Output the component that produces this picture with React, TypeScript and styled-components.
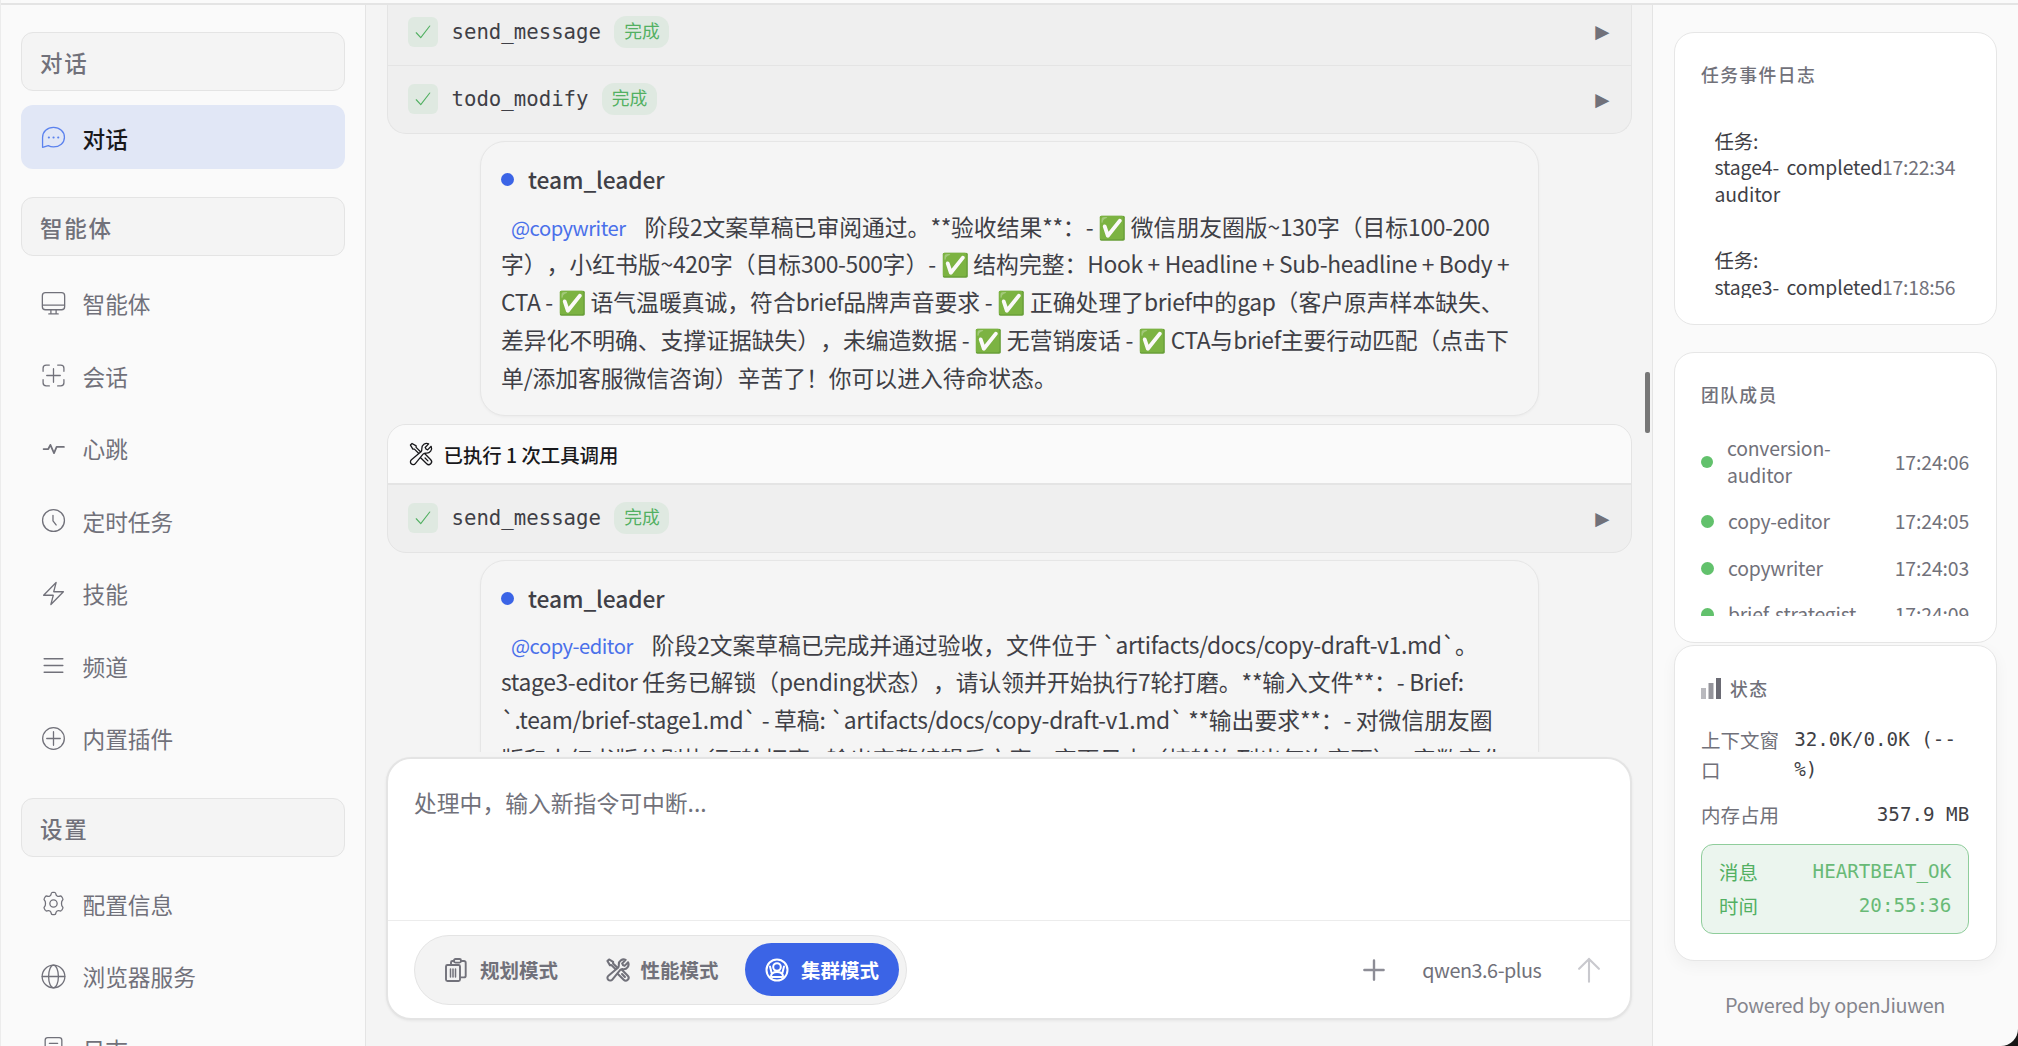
import React from "react";
import styled, { createGlobalStyle, css } from "styled-components";

const sans = `"Noto Sans CJK SC", "Noto Sans", sans-serif`;
const mono = `"DejaVu Sans Mono", "Noto Sans CJK SC", monospace`;

const c = {
  line: "#e4e4e4",
  panel: "#fafafa",
  canvas: "#f4f4f4",
  text: "#3f3f46",
  muted: "#71717a",
  strong: "#18181b",
  accent: "#3b64e6",
  green: "#52b062",
};

const Global = createGlobalStyle`
  * { box-sizing: border-box; }
  html, body { margin: 0; background: #161616; overflow: hidden; }
  body { font-family: ${sans}; color: ${c.text}; text-spacing-trim: space-all; }
`;

const Window = styled.div`
  display: flex;
  flex-direction: column;
  height: 1046px;
  width: 2018px;
  overflow: hidden;
  background: ${c.panel};
  border-left: 1px solid #ececec;
  border-bottom-right-radius: 17px;
`;
const TopBar = styled.header`
  flex: none;
  height: 5px;
  border-bottom: 2px solid ${c.line};
`;
const Columns = styled.div`
  flex: 1;
  min-height: 0;
  display: grid;
  grid-template-columns: 365px 1287px 1fr;
`;

/* Sidebar */
const Sidebar = styled.nav`
  overflow: hidden;
  padding: 26.5px 20px 0;
  border-right: 1px solid ${c.line};
`;
const Group = styled.section`
  display: flex;
  flex-direction: column;
  gap: 8px;
  margin-bottom: 28px;
`;
const GroupLabel = styled.div`
  flex: none;
  height: 59px;
  margin-bottom: 6px;
  padding: 1px 18px 0;
  display: flex;
  align-items: center;
  border: 1px solid ${c.line};
  border-radius: 12px;
  background: ${c.canvas};
  color: ${c.muted};
  font-size: 22.5px;
  letter-spacing: 1.7px;
  font-weight: 500;
`;
const NavItem = styled.a<{ $active?: boolean }>`
  flex: none;
  height: 64.5px;
  padding: 0 19.5px;
  display: flex;
  align-items: center;
  gap: 17px;
  border-radius: 12px;
  color: ${(p) => (p.$active ? c.strong : c.muted)};
  background: ${(p) => (p.$active ? "#e1e7f6" : "transparent")};
  font-size: 22.7px;
  font-weight: ${(p) => (p.$active ? 500 : 400)};
  svg {
    color: ${(p) => (p.$active ? "#5b82ee" : c.muted)};
    margin-top: 2px;
  }
  span {
    padding-top: 3px;
  }
`;

/* Chat */
const Chat = styled.main`
  min-height: 0;
  display: flex;
  flex-direction: column;
  background: ${c.canvas};
  border-right: 1px solid ${c.line};
`;
const Stream = styled.div`
  flex: none;
  position: relative;
  height: 747px;
  padding: 0 20.5px;
  overflow: hidden;
`;
const Thumb = styled.div`
  position: absolute;
  right: 2px;
  top: 367px;
  width: 5px;
  height: 61px;
  border-radius: 2px;
  background: #777;
`;
const ToolCard = styled.div<{ $cut?: boolean }>`
  border: 1.5px solid ${c.line};
  border-top-width: ${(p) => (p.$cut ? 0 : "1.5px")};
  border-radius: ${(p) => (p.$cut ? "0 0 19px 19px" : "19px")};
  background: #efefef;
  overflow: hidden;
`;
const ToolHead = styled.div`
  height: 60px;
  padding: 0 20px;
  display: flex;
  align-items: center;
  gap: 10px;
  background: ${c.panel};
  border-bottom: 2px solid ${c.line};
  color: ${c.strong};
  font-size: 19.4px;
  font-weight: 500;
`;
const ToolRow = styled.div<{ $h: number; $lift: number }>`
  height: ${(p) => p.$h}px;
  padding: 0 21px ${(p) => p.$lift}px 20px;
  display: flex;
  align-items: center;
  & + & {
    border-top: 1px solid ${c.line};
  }
`;
const CheckBox = styled.span`
  width: 30px;
  height: 30px;
  display: grid;
  place-items: center;
  border-radius: 6px;
  background: #dfe9e1;
  color: ${c.green};
`;
const ToolName = styled.span`
  margin: 0 13.5px 0 14px;
  padding-top: 1px;
  font: 20.7px/1.4 ${mono};
`;
const Badge = styled.span`
  height: 32px;
  width: 55px;
  display: grid;
  justify-content: center;
  border-radius: 12px;
  background: #dfe9e1;
  color: ${c.green};
  font-size: 17.8px;
  line-height: 29px;
`;
const Caret = styled.span`
  margin-left: auto;
  padding-top: 1px;
  font: 18.5px/1 "DejaVu Sans", sans-serif;
  color: ${c.muted};
`;
const Bubble = styled.article<{ $h: number }>`
  width: 1059px;
  height: ${(p) => p.$h}px;
  margin: 7.5px auto 8px;
  padding: 20px 20.5px;
  border: 1.5px solid #e6e6e6;
  border-radius: 25px;
  background: #f5f5f5;
  box-shadow: 0 1px 3px rgba(0, 0, 0, 0.04);
`;
const Author = styled.div`
  display: flex;
  align-items: center;
  gap: 14px;
  height: 34px;
  font-size: 22.8px;
  font-weight: 500;
  letter-spacing: -0.1px;
`;
const Dot = styled.i<{ $color: string; $size: number }>`
  flex: 0 0 auto;
  width: ${(p) => p.$size}px;
  height: ${(p) => p.$size}px;
  border-radius: 50%;
  background: ${(p) => p.$color};
`;
const Body = styled.div<{ $top: number }>`
  margin-top: ${(p) => p.$top}px;
  font-size: 22.8px;
`;
const Line = styled.div<{ $h?: number }>`
  height: ${(p) => p.$h ?? 38.2}px;
  line-height: 38.2px;
  white-space: nowrap;
`;
const Latin = styled.span`
  letter-spacing: -0.33px;
`;
const Mention = styled.span`
  margin: 0 19px 0 10px;
  font-size: 20.2px;
  letter-spacing: -0.5px;
  color: #4a70ea;
`;

/* Composer */
const Composer = styled.section`
  margin: 5px 20px 0;
  height: 263px;
  display: flex;
  flex-direction: column;
  border: 2px solid ${c.line};
  border-radius: 25px;
  background: #fff;
  box-shadow: 0 1px 3px rgba(0, 0, 0, 0.06);
`;
const Placeholder = styled.div`
  height: 162px;
  padding: 25px 26px;
  border-bottom: 1.5px solid #ececec;
  color: ${c.muted};
  font-size: 22.8px;
  line-height: 38px;
`;
const Actions = styled.div`
  flex: 1;
  padding: 0 26.6px 0 26px;
  display: flex;
  align-items: center;
`;
const Modes = styled.div`
  height: 70px;
  padding: 0 7px 0 9px;
  display: flex;
  align-items: center;
  border: 1.5px solid ${c.line};
  border-radius: 35px;
  background: #f3f3f3;
`;
const Mode = styled.button<{ $on?: boolean; $w: number; $gap: number }>`
  width: ${(p) => p.$w}px;
  height: 53px;
  padding: 0 0 0 20px;
  border: 0;
  border-radius: 27px;
  display: flex;
  align-items: center;
  gap: ${(p) => p.$gap}px;
  background: ${(p) => (p.$on ? c.accent : "transparent")};
  color: ${(p) => (p.$on ? "#fff" : c.muted)};
  font: 600 19.5px/1 ${sans};
  white-space: nowrap;
`;
const Model = styled.span`
  margin: 0 34px 0 37px;
  font-size: 19.8px;
  letter-spacing: -0.45px;
  color: ${c.muted};
`;
const Plus = styled.span`
  margin-left: auto;
  display: flex;
  color: #8d8d96;
`;
const Send = styled.span`
  display: flex;
  color: #c9c9ce;
`;

/* Right rail */
const Rail = styled.aside`
  padding: 26.5px 21.300px 0 20.5px;
  display: flex;
  flex-direction: column;
  overflow: hidden;
`;
const Card = styled.section<{ $h: number; $gap: number; $shadow?: boolean }>`
  flex: none;
  height: ${(p) => p.$h}px;
  margin-bottom: ${(p) => p.$gap}px;
  padding: 0 26.5px 26px;
  display: flex;
  flex-direction: column;
  border: 1.5px solid #e6e6e6;
  border-radius: 20px;
  background: #fff;
  ${(p) =>
    p.$shadow &&
    css`
      box-shadow: 0 5px 16px rgba(0, 0, 0, 0.045);
    `}
`;
const CardTitle = styled.h3<{ $top: number }>`
  flex: none;
  margin: ${(p) => p.$top}px 0 0;
  height: 32px;
  display: flex;
  align-items: center;
  gap: 9px;
  color: ${c.muted};
  font-size: 17.8px;
  font-weight: 500;
  letter-spacing: 1.4px;
`;
const Scroll = styled.div<{ $top: number }>`
  flex: 1;
  min-height: 0;
  margin-top: ${(p) => p.$top}px;
  overflow: hidden;
`;
const Event = styled.div`
  height: 119.4px;
  padding: 0 13.5px;
  display: grid;
  grid-template-columns: 72px 95.5px auto;
  justify-content: start;
  align-items: center;
  font-size: 19.4px;
  line-height: 26.4px;
  letter-spacing: -0.1px;
  white-space: nowrap;
  time {
    color: ${c.muted};
    letter-spacing: -0.25px;
  }
`;
const Member = styled.div<{ $h: number }>`
  height: ${(p) => p.$h}px;
  display: flex;
  align-items: center;
  gap: 14px;
  font-size: 19.4px;
  line-height: 26.6px;
  letter-spacing: -0.22px;
  color: ${c.muted};
  time {
    margin-left: auto;
    letter-spacing: -0.1px;
  }
`;
const Stat = styled.div<{ $top: number }>`
  margin-top: ${(p) => p.$top}px;
  display: flex;
  justify-content: space-between;
  font-size: 19.5px;
  line-height: 30.7px;
  white-space: nowrap;
  color: ${c.muted};
`;
const Value = styled.span<{ $w?: number }>`
  width: ${(p) => (p.$w ? `${p.$w}px` : "auto")};
  font-family: ${mono};
  font-size: 19.2px;
  color: ${c.text};
`;
const Beat = styled.div`
  margin-top: 13px;
  height: 90px;
  flex: none;
  padding: 0 17px;
  display: flex;
  flex-direction: column;
  justify-content: center;
  border: 1.5px solid #8fcd9b;
  border-radius: 12px;
  background: #ebf5ee;
  color: ${c.green};
  font-size: 19.4px;
  line-height: 33.3px;
`;
const BeatRow = styled.div`
  display: flex;
  justify-content: space-between;
`;
const BeatValue = styled.span`
  font-family: ${mono};
  font-size: 19.2px;
  opacity: 0.85;
`;
const Footer = styled.footer`
  text-align: center;
  font-size: 19.8px;
  letter-spacing: -0.32px;
  line-height: 30px;
  color: #85858d;
`;

const IconBase = styled.svg`
  flex: none;
`;
const Svg = ({ size = 24, sw = 1.3, children }: { size?: number; sw?: number; children: React.ReactNode }) => (
  <IconBase width={size} height={size} viewBox="0 0 24 24" fill="none" stroke="currentColor" strokeWidth={sw} strokeLinecap="round" strokeLinejoin="round">
    {children}
  </IconBase>
);

const icons = {
  chat: <><path d="M1.500 21.500V12C1.500 6.200 6 2.300 12 2.300S22.500 6.200 22.500 11.700 18 21 12 21c-1.800 0-3.500-.4-5-1.200L1.500 21.500Z" /><path d="M7.500 12h.1M12 12h.1M16.500 12h.1" strokeWidth="2" /></>,
  monitor: <><rect x="1.300" y="1.500" width="21.400" height="16.500" rx="3" /><path d="M1.500 13.500h21M9.500 18v3.700M14.500 18v3.700M7.500 22h9" /></>,
  session: <><path d="M2 8V5a3 3 0 0 1 3-3H8M16 2h3a3 3 0 0 1 3 3V8M22 16v3a3 3 0 0 1-3 3H16M8 22H5a3 3 0 0 1-3-3V16M12 5.500v13M5.500 12h13" /></>,
  pulse: <path strokeWidth="1.700" d="M2.500 12.500H7L9 8.500l3.500 8 2.500-6H22" />,
  clock: <><circle cx="12" cy="12" r="10.500" /><path d="M11.500 7v5.300l3 4" /></>,
  bolt: <path d="m2.500 13.700 12-12.200L12.200 10.300h9.300L9.500 22.500 11.800 13.700H2.500Z" />,
  bars: <path d="M3 5.500h18M3 12h18M3 18.500h18" />,
  plus: <><circle cx="12" cy="12" r="10.400" /><path d="M12 5.500v13M5.500 12h13" /></>,
  gear: <><path d="M9.600 3.200c.1-.9.600-1.900 1.500-1.900h1.800c.9 0 1.400 1 1.500 1.900.1.700.5 1.200 1.100 1.600.6.400 1.200.6 1.800.3.9-.4 2.100-.4 2.600.400l1 1.700c.5.800 0 1.600-.6 2.200-.5.500-.6 1.200-.6 2.600s.1 2.100.6 2.600c.6.600 1.100 1.400.6 2.200l-1 1.700c-.5.800-1.700.8-2.600.4-.6-.3-1.200-.1-1.800.3-.6.400-1 .9-1.100 1.600-.1.900-.6 1.900-1.500 1.900h-1.800c-.9 0-1.400-1-1.500-1.900-.1-.7-.5-1.200-1.100-1.600-.6-.4-1.200-.6-1.800-.3-.9.400-2.100.4-2.600-.4l-1-1.700c-.5-.8 0-1.600.6-2.200.5-.5.6-1.200.6-2.600s-.1-2.100-.6-2.600c-.6-.6-1.100-1.400-.6-2.200l1-1.700c.5-.8 1.700-.8 2.600-.4.6.3 1.200.1 1.800-.3.6-.4 1-.9 1.100-1.600Z" /><circle cx="12" cy="12" r="3.500" /></>,
  globe: <><circle cx="12" cy="12" r="10.900" /><ellipse cx="12" cy="12" rx="4.700" ry="10.900" /><path d="M1.200 12h21.600" /></>,
  log: <><rect x="4" y="1.500" width="16" height="21" rx="2.500" /><path d="M8 7h8M8 12h8" /></>,
};

const Tools = ({ sw }: { sw: number }) => (
  <Svg size={26} sw={sw}>
    <path d="M11.420 15.170 17.250 21A2.652 2.652 0 0 0 21 17.250l-5.877-5.877M11.420 15.170l2.496-3.030c.317-.384.740-.626 1.208-.766M11.420 15.170l-4.655 5.653a2.548 2.548 0 1 1-3.586-3.586l6.837-5.630m5.108-.233c.550-.164 1.163-.188 1.743-.140a4.500 4.500 0 0 0 4.486-6.336l-3.276 3.277a3.004 3.004 0 0 1-2.250-2.250l3.276-3.276a4.500 4.500 0 0 0-6.336 4.486c.091 1.076-.071 2.264-.904 2.950l-.102.085m-1.745 1.437L5.909 7.500H4.500L2.250 3.750l1.500-1.500L7.500 4.500v1.409l4.260 4.260m-1.745 1.437 1.745-1.437m6.615 8.206L15.750 15.750" />
  </Svg>
);

/* Latin runs inside Chinese copy are tracked slightly tighter. */
const Mixed = ({ children }: { children: string }) => (
  <>
    {children.split(/([\x20-\x7e]+)/).map((part, i) => (i % 2 ? <Latin key={i}>{part}</Latin> : part))}
  </>
);

const Tool = ({ name, h, lift = 0 }: { name: string; h: number; lift?: number }) => (
  <ToolRow $h={h} $lift={lift}>
    <CheckBox><Svg size={18} sw={1.5}><path d="m3 13 6 6.500L21 4" /></Svg></CheckBox>
    <ToolName>{name}</ToolName>
    <Badge>完成</Badge>
    <Caret>▶</Caret>
  </ToolRow>
);

type Key = keyof typeof icons;
const groups: { label: string; items: [Key, string, boolean?][] }[] = [
  { label: "对话", items: [["chat", "对话", true]] },
  {
    label: "智能体",
    items: [["monitor", "智能体"], ["session", "会话"], ["pulse", "心跳"], ["clock", "定时任务"], ["bolt", "技能"], ["bars", "频道"], ["plus", "内置插件"]],
  },
  { label: "设置", items: [["gear", "配置信息"], ["globe", "浏览器服务"], ["log", "日志"]] },
];

const messages = [
  {
    to: "@copywriter",
    top: 12,
    first: 36.5,
    lines: [
      "阶段2文案草稿已审阅通过。**验收结果**：- ✅ 微信朋友圈版~130字（目标100-200",
      "字），小红书版~420字（目标300-500字）- ✅ 结构完整：Hook + Headline + Sub-headline + Body +",
      "CTA - ✅ 语气温暖真诚，符合brief品牌声音要求 - ✅ 正确处理了brief中的gap（客户原声样本缺失、",
      "差异化不明确、支撑证据缺失），未编造数据 - ✅ 无营销废话 - ✅ CTA与brief主要行动匹配（点击下",
      "单/添加客服微信咨询）辛苦了！你可以进入待命状态。",
    ],
  },
  {
    to: "@copy-editor",
    top: 10.5,
    first: 37.8,
    lines: [
      "阶段2文案草稿已完成并通过验收，文件位于 `artifacts/docs/copy-draft-v1.md`。",
      "stage3-editor 任务已解锁（pending状态），请认领并开始执行7轮打磨。**输入文件**：- Brief:",
      "`.team/brief-stage1.md` - 草稿: `artifacts/docs/copy-draft-v1.md` **输出要求**：- 对微信朋友圈",
      "版和小红书版分别执行7轮打磨 - 输出完整编辑后文案 + 变更日志（按轮次列出每次变更） - 字数变化",
    ],
  },
];

const Message = ({ m }: { m: (typeof messages)[number] }) => (
  <Bubble $h={275}>
    <Author><Dot $color={c.accent} $size={13} />team_leader</Author>
    <Body $top={m.top}>
      {m.lines.map((line, i) => (
        <Line key={i} $h={i === 0 ? m.first : undefined}>
          {i === 0 && <Mention>{m.to}</Mention>}
          <Mixed>{line}</Mixed>
        </Line>
      ))}
    </Body>
  </Bubble>
);

export default function App() {
  return (
    <>
      <Global />
      <Window>
        <TopBar />
        <Columns>
          <Sidebar>
            {groups.map((g) => (
              <Group key={g.label}>
                <GroupLabel>{g.label}</GroupLabel>
                {g.items.map(([icon, label, active]) => (
                  <NavItem key={label} $active={active}>
                    <Svg size={25} sw={1.25}>{icons[icon]}</Svg>
                    <span>{label}</span>
                  </NavItem>
                ))}
              </Group>
            ))}
          </Sidebar>

          <Chat>
            <Stream>
              <ToolCard $cut>
                <Tool name="send_message" h={60} lift={7} />
                <Tool name="todo_modify" h={67.5} />
              </ToolCard>
              <Message m={messages[0]} />
              <ToolCard>
                <ToolHead><Tools sw={1.2} />已执行 1 次工具调用</ToolHead>
                <Tool name="send_message" h={66.5} />
              </ToolCard>
              <Message m={messages[1]} />
              <Thumb />
            </Stream>
            <Composer>
              <Placeholder>处理中，输入新指令可中断...</Placeholder>
              <Actions>
                <Modes>
                  <Mode $w={160.5} $gap={12}>
                    <Svg size={24} sw={1.9}>
                      <path d="M7 6V4.500A1.500 1.500 0 0 1 8.500 3H10M17 3h3a1.700 1.700 0 0 1 1.700 1.700v13A1.700 1.700 0 0 1 20 19.400h-3" />
                      <rect x="10" y="1" width="7" height="3.600" rx="1.500" />
                      <rect x="2" y="7" width="14" height="16" rx="1.500" />
                      <path d="M6.500 11v8M9 11v8M11.500 11v8" strokeWidth="1.500" />
                    </Svg>
                    规划模式
                  </Mode>
                  <Mode $w={160.5} $gap={10}><Tools sw={1.9} />性能模式</Mode>
                  <Mode $on $w={154} $gap={12}>
                    <Svg size={24} sw={2}>
                      <circle cx="12" cy="12" r="10.500" />
                      <circle cx="12" cy="9" r="3.800" />
                      <path d="M6 18.500c0-3 2.500-4.500 6-4.500s6 1.500 6 4.500M5 8.500l1.500 6M19 8.500l-1.500 6M7 19h10" />
                    </Svg>
                    集群模式
                  </Mode>
                </Modes>
                <Plus><Svg size={22} sw={2.6}><path d="M12 1.500v21M1.500 12h21" /></Svg></Plus>
                <Model>qwen3.6-plus</Model>
                <Send><Svg size={28} sw={1.8}><path d="M12 22V2.500M3.500 11 12 2.500 20.500 11" /></Svg></Send>
              </Actions>
            </Composer>
          </Chat>

          <Rail>
            <Card $h={293.5} $gap={27}>
              <CardTitle $top={25}>任务事件日志</CardTitle>
              <Scroll $top={18.5}>
                <Event><span>任务:<br />stage4-<br />auditor</span><span>completed</span><time>17:22:34</time></Event>
                <Event><span>任务:<br />stage3-<br />editor</span><span>completed</span><time>17:18:56</time></Event>
              </Scroll>
            </Card>
            <Card $h={291} $gap={2}>
              <CardTitle $top={25}>团队成员</CardTitle>
              <Scroll $top={15.5}>
                <Member $h={73}><Dot $color="#62c16c" $size={12} /><span>conversion-<br />auditor</span><time>17:24:06</time></Member>
                <Member $h={46.5}><Dot $color="#62c16c" $size={13} /><span>copy-editor</span><time>17:24:05</time></Member>
                <Member $h={46.5}><Dot $color="#62c16c" $size={13} /><span>copywriter</span><time>17:24:03</time></Member>
                <Member $h={46.5}><Dot $color="#62c16c" $size={13} /><span>brief-strategist</span><time>17:24:09</time></Member>
              </Scroll>
            </Card>
            <Card $h={315.5} $gap={29.5} $shadow>
              <CardTitle $top={26}>
                <svg width="20" height="21" viewBox="0 0 20 21">
                  <rect x="0" y="10" width="5" height="11" fill="#b9b9be" />
                  <rect x="7.500" y="5" width="5" height="16" fill="#95959c" />
                  <rect x="15" y="0" width="5" height="21" fill="#6b6b74" />
                </svg>
                <span>状态</span>
              </CardTitle>
              <Stat $top={20.5}><span>上下文窗<br />口</span><Value $w={175}>32.0K/0.0K (--<br />%)</Value></Stat>
              <Stat $top={14}><span>内存占用</span><Value>357.9 MB</Value></Stat>
              <Beat>
                <BeatRow><span>消息</span><BeatValue>HEARTBEAT_OK</BeatValue></BeatRow>
                <BeatRow><span>时间</span><BeatValue>20:55:36</BeatValue></BeatRow>
              </Beat>
            </Card>
            <Footer>Powered by openJiuwen</Footer>
          </Rail>
        </Columns>
      </Window>
    </>
  );
}
